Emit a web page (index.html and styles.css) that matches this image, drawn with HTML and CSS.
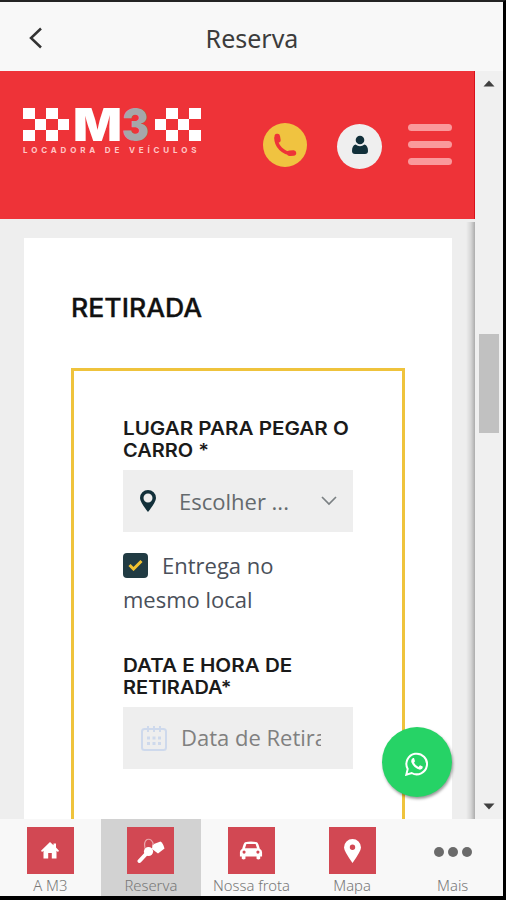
FILE: index.html
```html
<!DOCTYPE html>
<html lang="pt-BR">
<head>
<meta charset="utf-8">
<title>Reserva</title>
<link rel="stylesheet" href="styles.css">
</head>
<body>
<div class="app">
  <header class="topbar">
    <svg class="back" width="16" height="24" viewBox="0 0 16 24"><path d="M13 2.500L3 12l10 9.500" fill="none" stroke="#333" stroke-width="2.500"/></svg>
    <h1 class="title">Reserva</h1>
  </header>
  <div class="view">
    <div class="page">
      <div class="brandbar">
        <div class="logo">
          <div class="mark">
            <svg width="46" height="34" viewBox="0 0 46 34" fill="#fff"><path d="M0 0h12v11H0zM23 0h12v11H23zM12 11h11v11H12zM35 11h11v11H35zM0 22h12v11H0zM23 22h12v11H23z"/></svg>
            <span class="m">M</span><span class="three">3</span>
            <svg width="46" height="34" viewBox="0 0 46 34" fill="#fff"><path d="M11 0h12v11H11zM34 0h12v11H34zM0 11h11v11H0zM23 11h11v11H23zM11 22h12v11H11zM34 22h12v11H34z"/></svg>
          </div>
          <div class="tagline">LOCADORA DE VEÍCULOS</div>
        </div>
        <div class="phone"><svg width="24" height="24" viewBox="0 0 24 24" fill="none" stroke="#ee3338" stroke-linecap="round"><path d="M3 5C3 13 10 20.500 19 20.500" stroke-width="3.600"/><path d="M4.300 3.500l.6 3.500M16.800 20.200l3.700-.3" stroke-width="5.500"/></svg></div>
        <div class="user"><svg width="16" height="20" viewBox="0 0 16 20" fill="#12303a"><circle cx="8" cy="5" r="4.300"/><path d="M3.500 9.500Q8 13 12.500 9.500Q16 10.500 16 16Q16 19 13 19H3Q0 19 0 16Q0 10.500 3.500 9.500Z"/></svg></div>
        <div class="burger"><i></i><i></i><i></i></div>
      </div>
      <main class="card">
        <h2 class="heading">RETIRADA</h2>
        <div class="box">
          <div class="label"><span>LUGAR PARA PEGAR O</span><br><span class="short">CARRO *</span></div>
          <div class="field">
            <svg class="pin" width="16" height="22" viewBox="0 0 16 22"><path fill-rule="evenodd" d="M8 0a8 8 0 0 1 8 8q0 4-8 14Q0 12 0 8a8 8 0 0 1 8-8zM8 3.500a4.500 4.500 0 1 0 0 9a4.500 4.500 0 0 0 0-9z" fill="#12303a"/></svg>
            <span class="choose">Escolher ...</span>
            <svg class="chev" width="16" height="10" viewBox="0 0 16 10"><path d="M1 1l7 7 7-7" fill="none" stroke="#7b8083" stroke-width="1.700"/></svg>
          </div>
          <div class="check">
            <div class="row"><span class="tick"><svg width="15" height="12" viewBox="0 0 15 12"><path d="M1.500 6l4 4 8-8" fill="none" stroke="#f2c230" stroke-width="3"/></svg></span><span>Entrega no</span></div>
            <div>mesmo local</div>
          </div>
          <div class="label"><span>DATA E HORA DE</span><br><span class="short">RETIRADA*</span></div>
          <div class="field">
            <svg class="cal" width="26" height="26" viewBox="0 0 26 26" fill="none" stroke="#ced9ec" stroke-width="2"><rect x="1" y="4" width="24" height="21" rx="2.500"/><path d="M7 1v6M13 1v6M19 1v6"/><path stroke-width="3" stroke-dasharray="3 2.500" d="M6 13h14M6 18.500h14"/></svg>
            <span class="dtext">Data de Retirada</span>
          </div>
        </div>
      </main>
      <div class="edge"></div>
    </div>
    <div class="scroll">
      <svg width="12" height="7" viewBox="0 0 12 7"><path d="M.5 6.500L6 .5l5.500 6z" fill="#404040"/></svg>
      <div class="track"><div class="thumb"></div></div>
      <svg width="12" height="7" viewBox="0 0 12 7"><path d="M.5 .5L6 6.500l5.500-6z" fill="#404040"/></svg>
    </div>
    <div class="whats"><svg width="24" height="24" viewBox="0 0 24 24"><path d="M1.300 22.700L2.700 17a10.300 10.300 0 1 1 4 4z" fill="none" stroke="#fff" stroke-width="2"/><path d="M8 6Q5.500 7.500 6.500 10.500Q9 16.500 15 17.700Q18 17.500 17.700 14.600L15 13.300L13.500 15Q10.500 13.700 9 10.800L10 9.200L9 6Z" fill="#fff"/></svg></div>
  </div>
  <nav class="tabs">
    <div class="tab"><span class="tile"><svg width="18" height="17" viewBox="0 0 18 17" fill="#fff"><path d="M9 0l3.500 3.300V1.500h2.500v4L18 8.800 17 10l-1.500-1.200V16.500h-4.700V11H7.200v5.500H2.500V8.800L1 10 0 8.800z"/></svg></span><span>A M3</span></div>
    <div class="tab on"><span class="tile"><svg width="28" height="26" viewBox="0 0 28 26"><circle cx="11.500" cy="13.500" r="4.600" fill="#fff"/><path d="M9.500 15.500L2.500 23" stroke="#fff" stroke-width="4" stroke-linecap="round"/><path d="M15.500 6.500L23.500 3.500Q26 5 27.500 10.500L21 15.500l-6-4.500z" fill="#fff"/><path d="M8 10Q6.500 4 10 1.500Q15 0 16.500 7" fill="none" stroke="#e9a5aa" stroke-width="1.200"/></svg></span><span>Reserva</span></div>
    <div class="tab"><span class="tile"><svg width="24" height="19" viewBox="0 0 26 20"><path fill-rule="evenodd" d="M6.500 1Q13-.5 19.500 1Q21 2 22.500 8Q25 9 25 12v4.500h-2V19q-2 1.500-4 0v-2.500H7V19q-2 1.500-4 0v-2.500H1V12q0-3 2.500-4Q5 2 6.500 1zM8 3L6.500 7.500h13L18 3zM5.500 10a1.700 1.700 0 1 0 0 3.400a1.700 1.700 0 0 0 0-3.400zM20.500 10a1.700 1.700 0 1 0 0 3.400a1.700 1.700 0 0 0 0-3.400z" fill="#fff"/></svg></span><span>Nossa frota</span></div>
    <div class="tab"><span class="tile"><svg width="17" height="24" viewBox="0 0 17 24"><path fill-rule="evenodd" d="M8.500 0A8.500 8.500 0 0 1 17 8.500Q17 12 8.500 24Q0 12 0 8.500A8.500 8.500 0 0 1 8.500 0zM8.500 5.500a2.700 2.700 0 1 0 0 5.400a2.700 2.700 0 0 0 0-5.400z" fill="#fff"/></svg></span><span>Mapa</span></div>
    <div class="tab"><span class="dots"><i></i><i></i><i></i></span><span>Mais</span></div>
  </nav>
</div>
</body>
</html>
```
FILE: styles.css
```css
* { box-sizing: border-box; }
body { margin: 0; background: #000; font-family: "Open Sans", sans-serif; }
svg { display: block; flex: none; }
h1, h2 { margin: 0; }
span { white-space: nowrap; }
.app { width: 506px; height: 900px; border-top: 2px solid #242424; border-right: 3px solid #000; border-bottom: 4px solid #000; display: flex; flex-direction: column; overflow: hidden; }
.topbar { height: 69px; flex: none; background: #f8f8f8; display: flex; align-items: center; padding-left: 28px; }
.back { margin-top: 3px; }
.title { width: 416px; text-align: center; font: 400 25px/30px "Noto Sans", sans-serif; color: #3c3c3c; margin-top: 2px; }
.view { height: 748px; flex: none; display: flex; position: relative; overflow: hidden; }
.page { width: 475px; background: #eee; position: relative; overflow: hidden; }
.brandbar { height: 148px; background: #ee3338; border-right: 1px solid #d9101a; display: flex; align-items: flex-start; padding-left: 23px; }
.logo { width: 178px; margin-top: 37px; }
.mark { display: flex; height: 34px; align-items: flex-start; }
.m, .three { font: 900 45px/34px "Inter", sans-serif; transform-origin: left; }
.m { width: 48px; color: #fff; margin-left: 4px; transform: scaleX(1.14); }
.three { width: 34px; color: #a5a7aa; transform: translateX(1px) scaleX(.9); }
.tagline { font: 700 8px/10px "Inter", sans-serif; color: #ffc5c4; letter-spacing: 3.850px; white-space: nowrap; margin-top: 3px; }
.phone { width: 44px; height: 44px; border-radius: 50%; background: #f0c340; margin: 52px 0 0 62px; display: grid; place-items: center; }
.user { width: 45px; height: 45px; border-radius: 50%; background: #efefef; margin: 53px 0 0 30px; display: grid; place-items: center; padding-bottom: 3px; }
.burger { width: 44px; margin: 53px 0 0 26px; display: grid; gap: 10px; }
.burger i { height: 7px; border-radius: 4px; background: #fa999b; }
.card { margin: 19px 0 0 24px; width: 428px; height: 600px; background: #fff; padding: 55px 47px 0; }
.heading { font: 500 25px/30px "Inter", sans-serif; color: #111; -webkit-text-stroke: .3px #111; transform: scaleX(1.065); transform-origin: left; }
.box { width: 334px; height: 500px; border: 3px solid #efc33c; margin-top: 45px; padding: 46px 49px 0; }
.label { font: 600 18.500px/22px "Inter", sans-serif; color: #1a1a1a; }
.label span { display: inline-block; transform: scaleX(1.115); transform-origin: left; }
.label .short { transform: scaleX(1.08); }
.field { width: 230px; height: 62px; background: #eee; display: flex; align-items: center; margin-top: 9px; }
.pin { margin-left: 17px; }
.choose { width: 123px; margin: -1px 0 0 23px; font-size: 22px; color: #646a6d; }
.chev { margin-left: 19px; }
.check { margin: 16px 0 38px; font: 22px/34px "Open Sans", sans-serif; color: #4a505a; height: 68px; }
.row { display: flex; align-items: center; gap: 14px; }
.tick { display: grid; place-items: center; width: 25px; height: 25px; border-radius: 4px; background: #213b43; }
.cal { margin-left: 18px; }
.dtext { width: 140px; overflow: hidden; margin: -2px 0 0 14px; font-size: 22px; color: #808080; }
.edge { position: absolute; right: 0; top: 151px; bottom: 0; width: 9px; background: linear-gradient(to right, rgba(0,0,0,0), rgba(0,0,0,.1) 55%, rgba(0,0,0,.28)); }
.scroll { width: 28px; background: #f0f0f0; display: flex; flex-direction: column; align-items: center; padding: 9px 0; }
.track { flex: 1; padding-top: 247px; }
.thumb { width: 20px; height: 99px; background: #c1c1c1; }
.whats { position: absolute; left: 382px; top: 656px; width: 70px; height: 70px; border-radius: 50%; background: #26d366; box-shadow: 1px 2px 3px rgba(0,0,0,.4); display: grid; place-items: center; padding-top: 3px; }
.tabs { height: 77px; flex: none; background: #f8f8f8; display: grid; grid-template-columns: repeat(5, 1fr); }
.tab { display: flex; flex-direction: column; align-items: center; padding-top: 8px; font: 300 14.800px/17px "Noto Sans", "Open Sans", sans-serif; color: #777; }
.tab > span:last-child { margin-top: 3px; }
.on { background: #d2d2d2; }
.tile { width: 47px; height: 47px; background: #d24853; display: grid; place-items: center; }
.dots { height: 47px; display: flex; align-items: center; gap: 4px; padding-top: 3px; }
.dots i { width: 10px; height: 10px; border-radius: 50%; background: #6b6b6b; }
```
